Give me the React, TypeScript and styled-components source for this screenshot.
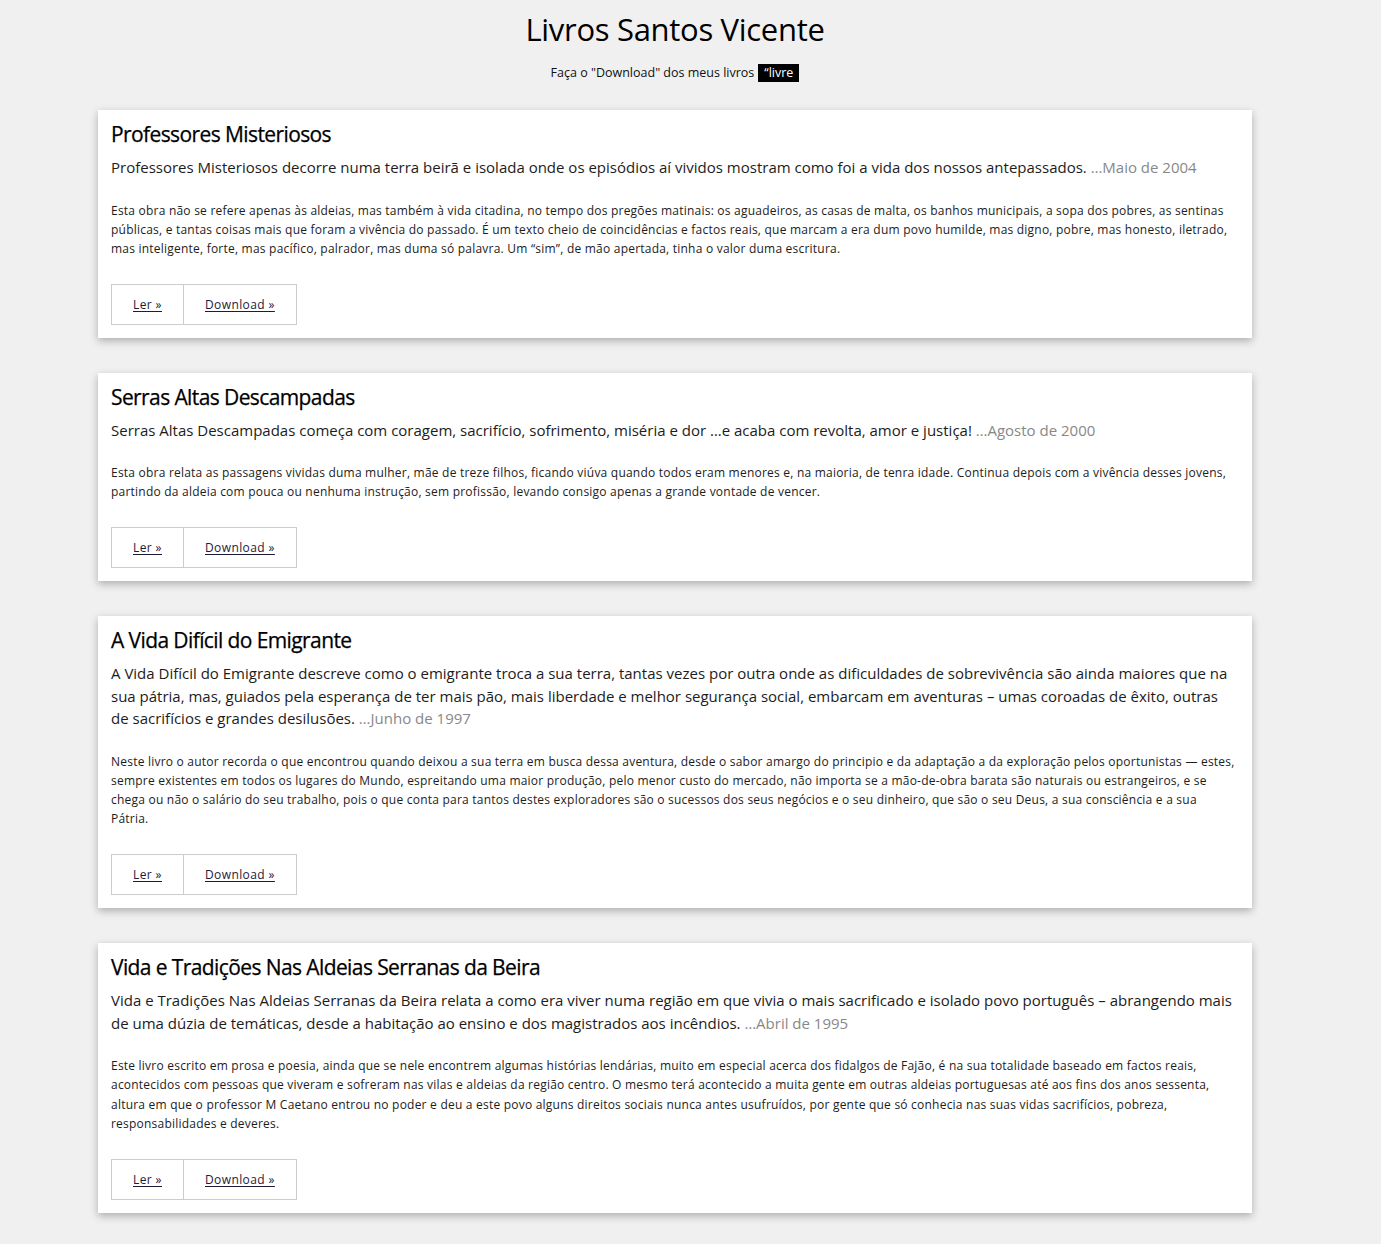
import React from "react";
import styled, { createGlobalStyle } from "styled-components";

const GlobalStyle = createGlobalStyle`
  html, body {
    margin: 0;
    padding: 0;
    background: #f0f0f0;
  }
  body {
    font-family: "Open Sans", "Liberation Sans", sans-serif;
    color: #1a1a1a;
  }
`;

const Page = styled.div`
  width: 1350px;
  padding: 0 0 30px;
  display: flex;
  flex-direction: column;
  align-items: center;
`;

const Header = styled.header`
  display: flex;
  flex-direction: column;
  align-items: center;
  padding-top: 10px;
  margin-bottom: 28px;
`;

const Title = styled.h1`
  margin: 0;
  font-size: 31px;
  line-height: 38px;
  font-weight: 500;
  color: #000;
  letter-spacing: -0.3px;
`;

const Tagline = styled.p`
  margin: 16px 0 0;
  font-size: 12.5px;
  line-height: 18px;
  color: #111;
  display: flex;
  align-items: center;
  gap: 4px;
`;

const Badge = styled.span`
  background: #000;
  color: #fff;
  padding: 0 6px;
  height: 18px;
  line-height: 18px;
  font-size: 12.5px;
`;

const CardList = styled.main`
  display: flex;
  flex-direction: column;
  gap: 35px;
`;

const Card = styled.article`
  width: 1154px;
  box-sizing: border-box;
  background: #fff;
  padding: 12px 16px 13px 13px;
  box-shadow: 0 3px 8px rgba(0, 0, 0, 0.28);
`;

const CardTitle = styled.h2`
  margin: 0 0 10px;
  font-size: 21px;
  line-height: 24px;
  font-weight: 500;
  color: #000;
  letter-spacing: -0.6px;
  -webkit-text-stroke: 0.25px #000;
`;

const Lead = styled.p`
  margin: 0 0 22px;
  font-size: 15px;
  line-height: 22.5px;
  color: #1c1c1c;
  letter-spacing: 0px;
`;

const DateNote = styled.span`
  color: #888;
`;

const Body = styled.p`
  margin: 0 0 26px;
  font-size: 12px;
  line-height: 19.1px;
  color: #1c1c1c;
  letter-spacing: 0.22px;
`;

const Actions = styled.div`
  display: flex;
`;

const ActionLink = styled.a`
  display: flex;
  align-items: center;
  height: 41px;
  box-sizing: border-box;
  padding: 0 21px;
  border: 1px solid #ccc;
  & + & {
    margin-left: -1px;
  }
  font-size: 12px;
  letter-spacing: 0.4px;
  color: #1f1a3a;
  text-decoration: underline;
  text-underline-offset: 2px;
  background: #fff;
`;

type Book = {
  title: string;
  lead: string;
  date: string;
  body: string;
};

const books: Book[] = [
  {
    title: "Professores Misteriosos",
    lead:
      "Professores Misteriosos decorre numa terra beirã e isolada onde os episódios aí vividos mostram como foi a vida dos nossos antepassados.",
    date: "…Maio de 2004",
    body:
      "Esta obra não se refere apenas às aldeias, mas também à vida citadina, no tempo dos pregões matinais: os aguadeiros, as casas de malta, os banhos municipais, a sopa dos pobres, as sentinas públicas, e tantas coisas mais que foram a vivência do passado. É um texto cheio de coincidências e factos reais, que marcam a era dum povo humilde, mas digno, pobre, mas honesto, iletrado, mas inteligente, forte, mas pacífico, palrador, mas duma só palavra. Um “sim”, de mão apertada, tinha o valor duma escritura.",
  },
  {
    title: "Serras Altas Descampadas",
    lead:
      "Serras Altas Descampadas começa com coragem, sacrifício, sofrimento, miséria e dor …e acaba com revolta, amor e justiça!",
    date: "…Agosto de 2000",
    body:
      "Esta obra relata as passagens vividas duma mulher, mãe de treze filhos, ficando viúva quando todos eram menores e, na maioria, de tenra idade. Continua depois com a vivência desses jovens, partindo da aldeia com pouca ou nenhuma instrução, sem profissão, levando consigo apenas a grande vontade de vencer.",
  },
  {
    title: "A Vida Difícil do Emigrante",
    lead:
      "A Vida Difícil do Emigrante descreve como o emigrante troca a sua terra, tantas vezes por outra onde as dificuldades de sobrevivência são ainda maiores que na sua pátria, mas, guiados pela esperança de ter mais pão, mais liberdade e melhor segurança social, embarcam em aventuras – umas coroadas de êxito, outras de sacrifícios e grandes desilusões.",
    date: "…Junho de 1997",
    body:
      "Neste livro o autor recorda o que encontrou quando deixou a sua terra em busca dessa aventura, desde o sabor amargo do principio e da adaptação a da exploração pelos oportunistas — estes, sempre existentes em todos os lugares do Mundo, espreitando uma maior produção, pelo menor custo do mercado, não importa se a mão-de-obra barata são naturais ou estrangeiros, e se chega ou não o salário do seu trabalho, pois o que conta para tantos destes exploradores são o sucessos dos seus negócios e o seu dinheiro, que são o seu Deus, a sua consciência e a sua Pátria.",
  },
  {
    title: "Vida e Tradições Nas Aldeias Serranas da Beira",
    lead:
      "Vida e Tradições Nas Aldeias Serranas da Beira relata a como era viver numa região em que vivia o mais sacrificado e isolado povo português – abrangendo mais de uma dúzia de temáticas, desde a habitação ao ensino e dos magistrados aos incêndios.",
    date: "…Abril de 1995",
    body:
      "Este livro escrito em prosa e poesia, ainda que se nele encontrem algumas histórias lendárias, muito em especial acerca dos fidalgos de Fajão, é na sua totalidade baseado em factos reais, acontecidos com pessoas que viveram e sofreram nas vilas e aldeias da região centro. O mesmo terá acontecido a muita gente em outras aldeias portuguesas até aos fins dos anos sessenta, altura em que o professor M Caetano entrou no poder e deu a este povo alguns direitos sociais nunca antes usufruídos, por gente que só conhecia nas suas vidas sacrifícios, pobreza, responsabilidades e deveres.",
  },
];

export default function App() {
  return (
    <>
      <GlobalStyle />
      <Page>
        <Header>
          <Title>Livros Santos Vicente</Title>
          <Tagline>
            Faça o "Download" dos meus livros <Badge>“livre</Badge>
          </Tagline>
        </Header>
        <CardList>
          {books.map((b) => (
            <Card key={b.title}>
              <CardTitle>{b.title}</CardTitle>
              <Lead>
                {b.lead} <DateNote>{b.date}</DateNote>
              </Lead>
              <Body>{b.body}</Body>
              <Actions>
                <ActionLink href="#">Ler »</ActionLink>
                <ActionLink href="#">Download »</ActionLink>
              </Actions>
            </Card>
          ))}
        </CardList>
      </Page>
    </>
  );
}
